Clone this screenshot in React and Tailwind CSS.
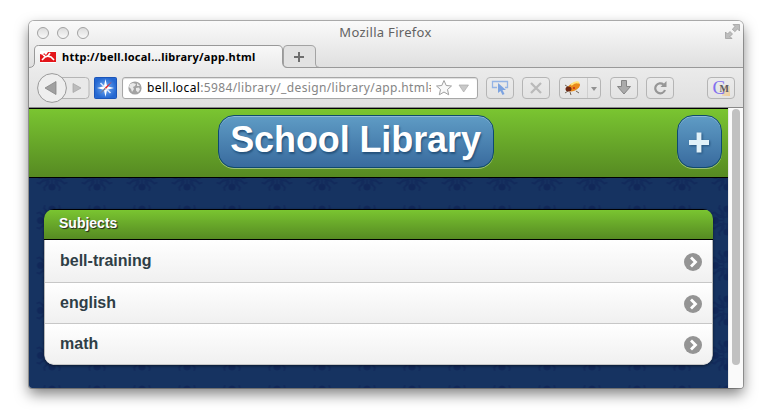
import React from "react";

const LUCIDA = "font-['Noto_Sans',sans-serif]";

function ToolButton({ className = "", children }) {
  return (
    <div className={`flex h-[22px] w-7 shrink-0 items-center justify-center rounded-[4px] border border-[#b5b5b5] bg-linear-to-b from-[#ebebeb] to-[#e3e3e3] ${className}`}>
      {children}
    </div>
  );
}

function TitleBar() {
  return (
    <div className="relative flex h-[23px] shrink-0 items-center pl-2">
      <div className="flex gap-2">
        {[0, 1, 2].map((i) => (
          <span key={i} className="size-3 rounded-full border border-[#a2a2a2] bg-linear-to-b from-[#dcdcdc] to-[#f8f8f8]" />
        ))}
      </div>
      <div className={`absolute inset-x-0 top-px pr-px text-center text-[13px] leading-5 tracking-[0.3px] text-[#626262] ${LUCIDA}`}>
        Mozilla Firefox
      </div>
      <svg className="absolute top-[3px] right-[3px]" width="15" height="15" viewBox="0 0 15 15" fill="#bdbdbd" stroke="#999" strokeWidth="0.7">
        <path d="M8 .5h6.500V7l-2-2-2.700 2.700-2.500-2.500L10 2.500zM.5 14.500V8l2 2L5 7.500 7.500 10 5 12.500l2 2z" />
      </svg>
    </div>
  );
}

function TabStrip() {
  return (
    <div className="relative flex h-6 shrink-0 items-end">
      <svg className="absolute inset-0" width="714" height="25" viewBox="0 0 714 25" fill="none">
        <defs>
          <linearGradient id="tab" x1="0" y1="0" x2="0" y2="1">
            <stop stopColor="#f8f8f8" />
            <stop offset="1" stopColor="#ebebeb" />
          </linearGradient>
        </defs>
        <path d="M254.500 22.500V5q0-3.500 3.500-3.500h24q4.500 0 4.500 4.500v14q0 3.500 4 3.500H258q-3.500 0-3.500-3" fill="#e2e2e2" stroke="#a3a3a3" />
        <path d="M0 24V23.500Q5.500 23.500 5.500 18V6q0-4.500 4-4.500H249q4.500 0 4.500 4.500V18q0 5.500 5.500 5.500V25H0z" fill="url(#tab)" />
        <path d="M0 23.500Q5.500 23.500 5.500 18V6q0-4.500 4-4.500H249q4.500 0 4.500 4.500V18q0 5.500 4.500 5.500H714" stroke="#999" />
        <path d="M265 13h10M270 8v10" stroke="#6e6e6e" strokeWidth="2" />
      </svg>
      <div className="relative flex h-[22px] items-center gap-[6px] pl-[11px]">
        <svg width="16" height="12" viewBox="0 0 16 12">
          <path fill="#fff" d="M0 0h16v12H0z" />
          <path fill="#e3151a" d="M0 3l3 1 1-2 2 2 2-3h8v10H0z" />
          <path d="M2 9l3-3 3-1 2-3M7 5l4 1 3 3M5 5L3 4" stroke="#fff" strokeWidth="1.600" fill="none" />
        </svg>
        <span className={`text-[11px] font-bold tracking-[0.26px] whitespace-nowrap text-black ${LUCIDA}`}>
          http://bell.local...library/app.html
        </span>
      </div>
    </div>
  );
}

function Toolbar() {
  return (
    <div className="flex h-[39px] shrink-0 items-center bg-linear-to-b from-[#ebebeb] to-[#dfdfdf] pl-2">
      <svg className="shrink-0" width="53" height="30" viewBox="0 0 53 30">
        <path d="M25 4.500h23.500q3.500 0 3.500 3.500v14q0 3.500-3.500 3.500H25z" fill="#e9e9e9" stroke="#b5b5b5" />
        <circle cx="15" cy="15" r="14.400" fill="#eee" stroke="#999" />
        <path d="M8 15l11-6.500v13z" fill="#a0a0a0" stroke="#858585" strokeWidth=".8" />
        <path d="M36 10.500v9l8-4.500z" fill="#bcbcbc" stroke="#a5a5a5" strokeWidth=".7" />
      </svg>
      <svg className="ml-1 shrink-0" width="23" height="22" viewBox="0 0 23 22">
        <defs>
          <radialGradient id="compass">
            <stop stopColor="#75aef2" />
            <stop offset="1" stopColor="#2568d2" />
          </radialGradient>
        </defs>
        <rect x=".5" y=".5" width="22" height="21" rx="1" fill="url(#compass)" stroke="#1c55b8" />
        <path d="M11.500 2l1.600 7.200L20 11l-6.900 1.800L11.500 20l-1.600-7.200L3 11l6.900-1.800z" fill="#fff" />
        <path d="M6.500 6l4 4M16.500 16l-4-4" stroke="#dceaff" strokeWidth="1.500" />
        <path d="M18 4.500l-5.700 7.300-1.400-1.300z" fill="#e42b2f" />
        <path d="M5.500 17l5.200-6.200 1.400 1.300z" fill="#777b8d" />
      </svg>
      <div className="ml-[5px] flex h-[22px] w-[356px] shrink-0 items-center rounded-[3px] border border-[#a7a7a7] bg-white pl-[5px] shadow-[inset_0_1px_1px_#ddd]">
        <svg className="shrink-0" width="14" height="14" viewBox="0 0 14 14">
          <circle cx="7" cy="7" r="6.600" fill="#a3a3a3" />
          <path d="M2 3l3-1 3 1-1 2-2 1 1 2-2 3-1-3-2-2zM9 2l3 3-3 0zM8 7l3-.5 1 2-2 3-2-2z" fill="#e9e9e9" />
        </svg>
        <div className={`ml-[5px] w-[284px] overflow-hidden text-[12px] leading-5 tracking-[0.37px] whitespace-nowrap text-[#858585] ${LUCIDA}`}>
          <span className="text-black">bell.local</span>:5984/library/_design/library/app.html#
        </div>
        <svg className="ml-1 shrink-0" width="34" height="18" viewBox="0 0 34 18">
          <path d="M9 1.500l2.200 5 5.300.5-4 3.500 1.200 5.300L9 13l-4.700 2.800 1.200-5.300-4-3.500 5.300-.5z" fill="#f9f9f9" stroke="#9f9f9f" />
          <path d="M24 6h9.500L28.700 13z" fill="#c9c9c9" stroke="#aaa" strokeWidth=".7" />
        </svg>
      </div>
      <ToolButton className="ml-2">
        <svg width="18" height="16" viewBox="0 0 18 16">
          <path d="M6 7.500H1.500v-6h15v6H14" fill="none" stroke="#95b4e5" strokeWidth="1.300" />
          <path d="M7 3v10l2.500-2 2 4 2-1-2-4H15z" fill="#7ca3e0" />
        </svg>
      </ToolButton>
      <ToolButton className="ml-2">
        <svg width="12" height="12" viewBox="0 0 12 12"><path d="M1 1l10 10M11 1L1 11" stroke="#bababa" strokeWidth="2.300" /></svg>
      </ToolButton>
      <ToolButton className="ml-[9px] w-[42px]">
        <svg width="40" height="20" viewBox="0 0 40 20">
          <path d="M8 13L5 15M10 14l1 3M16 13l3 2M8 9L5 7" stroke="#74665a" />
          <ellipse cx="13.500" cy="9" rx="7" ry="3.800" transform="rotate(-25 13.500 9)" fill="#e98a1b" />
          <path d="M11 7q5-4 8-2" stroke="#ffe47a" strokeWidth="2" fill="none" />
          <ellipse cx="8.500" cy="11" rx="3" ry="2.500" fill="#6d2914" />
          <circle cx="14" cy="10" r="1" fill="#c72914" />
          <path d="M27.500 0v20" stroke="#cfcfcf" />
          <path d="M31 9h6l-3 4z" fill="#929292" />
        </svg>
      </ToolButton>
      <ToolButton className="ml-[9px]">
        <svg width="14" height="15" viewBox="0 0 14 15"><path d="M4.500.5h5v6h4L7 14 .5 6.500h4z" fill="#aaa" stroke="#858585" /></svg>
      </ToolButton>
      <ToolButton className="ml-2">
        <svg width="14" height="14" viewBox="0 0 14 14">
          <path d="M10.500 3.500A5 5 0 1 0 12 9" fill="none" stroke="#969696" strokeWidth="2.200" />
          <path d="M13.500 0v6h-6z" fill="#969696" />
        </svg>
      </ToolButton>
      <ToolButton className="ml-[33px]">
        <div className="relative h-5 w-[17px]">
          <span className="absolute right-0 bottom-[2px] h-2.5 w-2 bg-linear-to-br from-[#e6e0d6] to-[#efcd96]" />
          <span className="absolute top-0 left-0 font-['Liberation_Serif',serif] text-[19px] leading-5 text-[#8270ee]">C</span>
          <span className="absolute top-[5px] left-[7px] font-['Liberation_Serif',serif] text-[10px] leading-3 font-bold text-[#5d5a60]">M</span>
        </div>
      </ToolButton>
    </div>
  );
}

function Frond({ rotate }) {
  return (
    <g transform={`rotate(${rotate})`}>
      <circle cx="0" cy="11.500" r="3.600" fill="#112859" stroke="none" />
      <path d="M0 9V3M-1 3Q-5 4-5.500 8T-9 12.500M1 3Q5 4 5.500 8T9 12.500M-5 3Q-9 3-10 6T-15.500 7M5 3Q9 3 10 6T15.500 7" />
    </g>
  );
}

function Damask() {
  return (
    <svg className="absolute inset-0" width="699" height="280">
      <defs>
        <pattern id="damask" x="0.500" y="45" width="45" height="45" patternUnits="userSpaceOnUse">
          <g transform="translate(22.500 22.500)" fill="none" stroke="#122a5b" strokeWidth="1.700">
            <Frond rotate={0} />
            <Frond rotate={90} />
            <Frond rotate={180} />
            <Frond rotate={270} />
          </g>
        </pattern>
      </defs>
      <rect width="699" height="280" fill="#163361" />
      <rect width="699" height="280" fill="url(#damask)" />
    </svg>
  );
}

const BLUE_BUTTON =
  "flex items-center justify-center rounded-2xl border border-[#0e4a70] bg-linear-to-b from-[#5f9cc5] to-[#396b9e] shadow-[0_1px_0_rgba(255,255,255,0.4),inset_0_1px_0_rgba(255,255,255,0.3)]";

function Header() {
  return (
    <header className="relative flex h-[70px] justify-center border-y border-black bg-linear-to-b from-[#7ac531] to-[#568a22] pt-1.5 pr-[45px]">
      <h1 className={`h-[53px] w-[276px] pr-px pb-[3px] font-['Liberation_Sans',sans-serif] text-[36px] font-bold tracking-[-0.1px] whitespace-nowrap text-white [text-shadow:1px_2px_2px_#24527c] ${BLUE_BUTTON}`}>
        School Library
      </h1>
      <button className={`absolute top-1.5 right-1.5 h-[53px] w-[45px] ${BLUE_BUTTON}`}>
        <svg width="22" height="22" viewBox="0 0 22 22" className="drop-shadow-[1px_1px_1px_#24527c]">
          <path d="M0 11.500h20M10 1.500v20" stroke="#e1f1f8" strokeWidth="4.800" />
        </svg>
      </button>
    </header>
  );
}

function Row({ label, className }) {
  return (
    <li className={`flex items-center justify-between border-b border-[#c7c7c7] bg-linear-to-b from-white to-[#f0f0f0] pr-[10px] pl-[15px] ${className}`}>
      <span className="font-['Liberation_Sans',sans-serif] text-[16px] leading-5 font-bold text-[#2f3e46]">{label}</span>
      <svg className="mt-px" width="18" height="18" viewBox="0 0 18 18">
        <circle cx="9" cy="9" r="9" fill="#949494" />
        <path d="M7 4.500L11.500 9 7 13.500" fill="none" stroke="#fff" strokeWidth="2.800" />
      </svg>
    </li>
  );
}

function Page() {
  return (
    <div className="relative h-[280px] w-[699px] overflow-hidden">
      <Damask />
      <Header />
      <section className="relative mt-[31px] ml-[15px] w-[669px] overflow-hidden rounded-[10px] shadow-[0_1px_3px_rgba(0,0,0,0.5)]">
        <h2 className="flex h-[31px] items-center border-y border-black bg-linear-to-b from-[#7ac531] to-[#568a22] pb-[3px] pl-[15px] font-['Liberation_Sans',sans-serif] text-[14px] font-bold text-white [text-shadow:1px_1px_1px_#222]">
          Subjects
        </h2>
        <ul className="rounded-b-[10px] border-x border-[#b7b7b7] bg-white">
          <Row label="bell-training" className="h-[43px]" />
          <Row label="english" className="h-[41px]" />
          <Row label="math" className="h-[41px] rounded-b-[9px]" />
        </ul>
      </section>
    </div>
  );
}

export default function App() {
  return (
    <main className="h-[415px] w-[769px] overflow-hidden bg-white pt-[21px] pl-[29px]">
      <div className="relative flex h-[367px] w-[714px] flex-col overflow-hidden rounded-t-[5px] rounded-b-[3px] bg-linear-to-b from-[#fafafa] to-[#dedede] to-[48px] shadow-[0_0_0_1px_rgba(0,0,0,0.28),0_6px_14px_rgba(0,0,0,0.5)]">
        <TitleBar />
        <TabStrip />
        <Toolbar />
        <div className="flex min-h-0 flex-1 border-t border-[#898989]">
          <Page />
          <div className="flex flex-1 bg-[#fafafa] pt-px pl-1 shadow-[inset_1px_0_0_#e9e9e9]">
            <div className="h-[256px] w-2 rounded-full bg-[#c1c1c1]" />
          </div>
        </div>
      </div>
    </main>
  );
}
